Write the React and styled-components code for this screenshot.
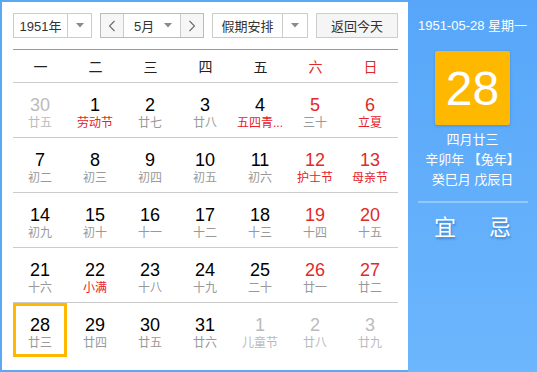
import styled, { createGlobalStyle } from 'styled-components'

const GlobalStyle = createGlobalStyle`
    body {
        margin: 0;
        background: #ffffff;
        font-family: "Liberation Sans", "Noto Sans CJK SC", sans-serif;
    }
`

const weekdays = ['一', '二', '三', '四', '五', '六', '日']

// [day, lunar, otherMonth, festival]
const weeks = [
    [[30, '廿五', true], [1, '劳动节', false, true], [2, '廿七'], [3, '廿八'], [4, '五四青...', false, true], [5, '三十'], [6, '立夏', false, true]],
    [[7, '初二'], [8, '初三'], [9, '初四'], [10, '初五'], [11, '初六'], [12, '护士节', false, true], [13, '母亲节', false, true]],
    [[14, '初九'], [15, '初十'], [16, '十一'], [17, '十二'], [18, '十三'], [19, '十四'], [20, '十五']],
    [[21, '十六'], [22, '小满', false, true], [23, '十八'], [24, '十九'], [25, '二十'], [26, '廿一'], [27, '廿二']],
    [[28, '廿三'], [29, '廿四'], [30, '廿五'], [31, '廿六'], [1, '儿童节', true], [2, '廿八', true], [3, '廿九', true]],
]

function Caret () {
    return (
        <svg width="8" height="5" viewBox="0 0 8 5">
            <polygon points="0,0 8,0 4,4.5" fill="#8a8a8a" />
        </svg>
    )
}

function Chevron ({ dir }) {
    return (
        <svg width="8" height="12" viewBox="0 0 8 12">
            <polyline
                points={dir === 'left' ? '6.5,1 1.5,6 6.5,11' : '1.5,1 6.5,6 1.5,11'}
                fill="none"
                stroke="#6a6a6a"
                strokeWidth="1.1"
            />
        </svg>
    )
}

export default function App () {
    return (
        <>
            <GlobalStyle />
            <Frame>
                <Calendar>
                    <Toolbar>
                        <Select $width={79} $label={54}>
                            <SelectLabel>1951年</SelectLabel>
                            <SelectArrow><Caret /></SelectArrow>
                        </Select>

                        <MonthGroup>
                            <StepButton><Chevron dir="left" /></StepButton>
                            <MonthSelect>
                                <span>5月</span>
                                <Caret />
                            </MonthSelect>
                            <StepButton><Chevron dir="right" /></StepButton>
                        </MonthGroup>

                        <Select $width={96} $label={70}>
                            <SelectLabel>假期安排</SelectLabel>
                            <SelectArrow><Caret /></SelectArrow>
                        </Select>

                        <TodayButton>返回今天</TodayButton>
                    </Toolbar>

                    <WeekHeader>
                        {weekdays.map((w, i) => (
                            <WeekName key={w} $weekend={i > 4}>{w}</WeekName>
                        ))}
                    </WeekHeader>

                    {weeks.map((week, r) => (
                        <WeekRow key={r} $last={r === weeks.length - 1}>
                            {week.map(([day, lunar, other, festival], i) => (
                                <DayCell key={i} $today={r === 4 && i === 0}>
                                    <DayNumber $other={other} $weekend={i > 4}>{day}</DayNumber>
                                    <Lunar $other={other} $festival={festival}>{lunar}</Lunar>
                                </DayCell>
                            ))}
                        </WeekRow>
                    ))}
                </Calendar>

                <Side>
                    <SideDate>1951-05-28 星期一</SideDate>
                    <BigDay>28</BigDay>
                    <LunarInfo>
                        <div>四月廿三</div>
                        <div>辛卯年 【兔年】</div>
                        <div>癸巳月 戊辰日</div>
                    </LunarInfo>
                    <SideRule />
                    <Advice>
                        <span>宜</span>
                        <span>忌</span>
                    </Advice>
                </Side>
            </Frame>
        </>
    )
}

const Frame = styled.div`
    width: 537px;
    height: 372px;
    box-sizing: border-box;
    border: 2px solid #5ba8f5;
    border-right: none;
    display: flex;
    background: #ffffff;
`

const Calendar = styled.div`
    width: 406px;
    box-sizing: border-box;
    padding: 11px 10px 0 11px;
    display: flex;
    flex-direction: column;
`

const Toolbar = styled.div`
    display: flex;
    gap: 8px;
    height: 25px;
    padding-bottom: 11px;
    border-bottom: 1px solid #5ba8f5;
`

const Select = styled.div`
    width: ${p => p.$width}px;
    height: 25px;
    box-sizing: border-box;
    border: 1px solid #cccccc;
    display: grid;
    grid-template-columns: ${p => p.$label}px 1fr;
    font-size: 13px;
    color: #333333;
`

const SelectLabel = styled.div`
    display: flex;
    align-items: center;
    justify-content: center;
    border-right: 1px solid #cccccc;
`

const SelectArrow = styled.div`
    display: flex;
    align-items: center;
    justify-content: center;
`

const MonthGroup = styled.div`
    display: flex;
    width: 104px;
    height: 25px;
    box-sizing: border-box;
    border: 1px solid #bbbbbb;
`

const StepButton = styled.div`
    width: 22px;
    display: flex;
    align-items: center;
    justify-content: center;
    background: #f6f6f6;
`

const MonthSelect = styled.div`
    flex: 1;
    display: flex;
    align-items: center;
    justify-content: space-between;
    padding: 0 8px 0 10px;
    border-left: 1px solid #cccccc;
    border-right: 1px solid #cccccc;
    background: #ffffff;
    font-size: 13px;
    color: #333333;
`

const TodayButton = styled.div`
    width: 82px;
    height: 25px;
    box-sizing: border-box;
    border: 1px solid #cccccc;
    background: #f5f5f5;
    display: flex;
    align-items: center;
    justify-content: center;
    font-size: 13px;
    color: #333333;
`

const WeekHeader = styled.div`
    display: grid;
    grid-template-columns: repeat(7, 55px);
    height: 32px;
    border-bottom: 1px solid #cccccc;
`

const WeekName = styled.div`
    display: flex;
    align-items: center;
    justify-content: center;
    font-size: 14px;
    color: ${p => (p.$weekend ? '#e02a2a' : '#222222')};
`

const WeekRow = styled.div`
    display: grid;
    grid-template-columns: repeat(7, 55px);
    height: 54px;
    border-bottom: ${p => (p.$last ? 'none' : '1px solid #cccccc')};
`

const DayCell = styled.div`
    display: flex;
    flex-direction: column;
    align-items: center;
    box-sizing: border-box;
    width: 54px;
    padding-top: ${p => (p.$today ? 9 : 12)}px;
    border: ${p => (p.$today ? '3px solid #ffb800' : 'none')};
`

const DayNumber = styled.div`
    font-size: 18px;
    line-height: 20px;
    color: ${p => (p.$other ? '#bbbbbb' : p.$weekend ? '#e02a2a' : '#000000')};
`

const Lunar = styled.div`
    font-size: 12px;
    line-height: 16px;
    white-space: nowrap;
    color: ${p => (p.$other ? '#bbbbbb' : p.$festival ? '#e8202a' : '#999999')};
`

const Side = styled.div`
    flex: 1;
    margin-top: -2px;
    margin-bottom: -2px;
    background: linear-gradient(180deg, #57a6f9 0%, #6cb6fd 100%);
    display: flex;
    flex-direction: column;
    align-items: center;
    padding-top: 17px;
    color: #ffffff;
`

const SideDate = styled.div`
    font-size: 13px;
    line-height: 18px;
`

const BigDay = styled.div`
    margin-top: 16px;
    width: 75px;
    height: 74px;
    border-radius: 2px;
    background: #ffb800;
    box-shadow: 0 1px 3px rgba(40, 90, 160, 0.35);
    display: flex;
    align-items: center;
    justify-content: center;
    font-size: 48px;
    color: #ffffff;
`

const LunarInfo = styled.div`
    margin-top: 5px;
    font-size: 13px;
    line-height: 20px;
    text-align: center;
`

const SideRule = styled.div`
    margin-top: 11px;
    width: 110px;
    height: 2px;
    background: #92c8fb;
`

const Advice = styled.div`
    margin-top: 10px;
    display: flex;
    gap: 33px;
    font-size: 22px;
    line-height: 30px;
    text-shadow: 1px 2px 2px rgba(30, 80, 150, 0.45);
`
